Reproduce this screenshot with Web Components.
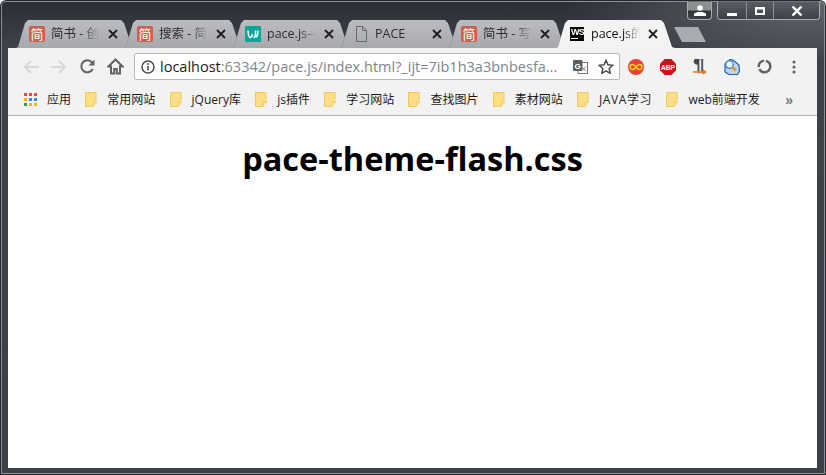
<!DOCTYPE html>
<html lang="zh">
<head>
<meta charset="utf-8">
<title>pace-theme-flash.css</title>
<style>
  html, body { margin: 0; padding: 0; height: 100%; overflow: hidden; }
  body { font-family: "Open Sans", "Noto Sans CJK SC", sans-serif; }
</style>
</head>
<body>
<browser-window>
  <window-controls slot="controls"></window-controls>
  <tab-strip slot="tabs">
    <browser-tab label="简书 - 创" icon="jian"></browser-tab>
    <browser-tab label="搜索 - 简" icon="jian"></browser-tab>
    <browser-tab label="pace.js—" icon="face"></browser-tab>
    <browser-tab label="PACE" icon="doc"></browser-tab>
    <browser-tab label="简书 - 写" icon="jian"></browser-tab>
    <browser-tab label="pace.js的" icon="ws" active></browser-tab>
  </tab-strip>
  <nav-bar slot="nav"></nav-bar>
  <bookmark-bar slot="bookmarks">
    <book-mark apps>应用</book-mark>
    <book-mark>常用网站</book-mark>
    <book-mark>jQuery库</book-mark>
    <book-mark>js插件</book-mark>
    <book-mark>学习网站</book-mark>
    <book-mark>查找图片</book-mark>
    <book-mark>素材网站</book-mark>
    <book-mark style="letter-spacing: .6px">JAVA学习</book-mark>
    <book-mark>web前端开发</book-mark>
  </bookmark-bar>
  <page-view>pace-theme-flash.css</page-view>
</browser-window>

<script>
// browser-window.js
class BrowserWindow extends HTMLElement {
  constructor() {
    super();
    this.attachShadow({ mode: "open" }).innerHTML = `
<style>
  :host {
    display: flex;
    flex-direction: column;
    box-sizing: border-box;
    height: 475px;
    width: 826px;
    padding-bottom: 7px;
    border-radius: 6px 6px 0 0;
    background:
      radial-gradient(ellipse 260px 60px at 100% 0, rgba(255,255,255,0.28), transparent),
      linear-gradient(#2b2e34 0, #3e434a 48px, #3b4049 100%);
    box-shadow: inset 0 0 0 1px #25272b, inset 0 0 0 2px #8d9096;
  }
  .body { display: flex; flex-direction: column; flex: 1; margin: 0 9px 0 8px; min-height: 0; }
</style>
<slot name="controls"></slot>
<slot name="tabs"></slot>
<div class="body">
  <slot name="nav"></slot>
  <slot name="bookmarks"></slot>
  <slot></slot>
</div>`;
  }
}

class WindowControls extends HTMLElement {
  constructor() {
    super();
    this.attachShadow({ mode: "open" }).innerHTML = `
<style>
  :host { display: flex; justify-content: flex-end; gap: 5px; height: 20px; box-sizing: border-box; padding: 1px 6px 0 0; }
  .btn {
    display: flex; align-items: center; justify-content: center;
    box-sizing: border-box; height: 19px;
    border: 1px solid #a9acb1; border-top-color: #6f7277;
    background: linear-gradient(#5a5e64, #3d4148);
  }
  .profile { width: 25px; border-radius: 0 0 4px 4px; background: linear-gradient(#8f9295 0, #8a8d90 45%, #33363b 55%, #3a3d43 100%); }
  .group { display: flex; border-radius: 0 0 4px 4px; overflow: hidden; border: 1px solid #a9acb1; border-top-color: #6f7277; height: 19px; box-sizing: border-box; }
  .group .btn { border: 0; height: 100%; border-left: 1px solid #8a8d92; }
  .group .btn:first-child { border-left: 0; }
  .min { width: 28px; } .max { width: 27px; } .close { width: 46px; }
  svg { display: block; }
</style>
<div class="btn profile">
  <svg width="12" height="11" viewBox="0 0 12 11"><circle cx="6" cy="3" r="2.800" fill="#fff"/><path d="M0 11V8.600L3.600 7h4.800L12 8.600V11z" fill="#fff"/></svg>
</div>
<div class="group">
  <div class="btn min"><svg width="10" height="14" viewBox="0 0 10 14"><rect y="9" width="10" height="3" fill="#fff"/></svg></div>
  <div class="btn max"><svg width="10" height="8" viewBox="0 0 10 8"><path d="M0 0h10v8H0z M2 2.500v3.500h6V2.500z" fill="#fff" fill-rule="evenodd"/></svg></div>
  <div class="btn close"><svg width="12" height="10" viewBox="0 0 12 10"><path d="M1.500 0.500 L10.500 9.500 M10.500 0.500 L1.500 9.500" stroke="#fff" stroke-width="2.400" fill="none"/></svg></div>
</div>`;
  }
}

class TabStrip extends HTMLElement {
  constructor() {
    super();
    this.attachShadow({ mode: "open" }).innerHTML = `
<style>
  :host { display: flex; align-items: flex-start; height: 28px; padding-left: 16px; }
  .new {
    width: 32px; height: 15px; margin: 7px 0 0 10px;
    background: #a9abae;
    clip-path: polygon(0 0, 24px 0, 32px 15px, 8px 15px);
  }
</style>
<slot></slot>
<div class="new"></div>`;
  }
}

const FAVICONS = {
  jian: `<span class="jian">简</span>`,
  face: `<svg width="16" height="16" viewBox="0 0 16 16"><rect width="16" height="16" rx="1" fill="#0ba39a"/><path d="M3 4.500c.2 4.500 .8 7 2.300 7S7.300 10 7.300 8M10.500 4.500V9c0 1.700-.8 2.500-2 2.500" stroke="#eafaf8" stroke-width="1.600" fill="none"/><path d="M13 4.500c0 3.500-.4 5.500-2 7" stroke="#eafaf8" stroke-width="1.600" fill="none"/></svg>`,
  doc: `<svg width="16" height="16" viewBox="0 0 16 16"><path d="M3.500 .5h6l4 4v11h-10z M9.500 .5v4h4" stroke="#666a6f" fill="none"/></svg>`,
  ws: `<span class="ws"><b>WS</b><i></i></span>`,
};

class BrowserTab extends HTMLElement {
  constructor() {
    super();
    this.attachShadow({ mode: "open" });
  }
  connectedCallback() {
    const active = this.hasAttribute("active");
    this.shadowRoot.innerHTML = `
<style>
  :host {
    display: block; flex: none; position: relative;
    width: 119px; height: 28px; margin-right: -11px;
    z-index: ${active ? 2 : 1};
    filter: drop-shadow(0.6px 0 0 rgba(70,72,76,0.75));
  }
  .shape {
    display: flex; align-items: center; box-sizing: border-box; height: 100%;
    padding: 0 0 1px 13px;
    background: ${active ? "#f3f3f3" : "linear-gradient(#bbbdc0, #a6a8ac)"};
    clip-path: polygon(0 28px, 2px 27px, 9px 3px, 12px 0, 105px 0, 108px 3px, 116px 27px, 119px 28px);
  }
  .icon { width: 16px; height: 16px; flex: none; }
  .icon svg { display: block; }
  .jian {
    display: block; width: 16px; height: 16px; border-radius: 2px;
    background: #c9614f; color: #fff; text-align: center;
    font: 13px/16px "Noto Sans CJK SC", sans-serif;
  }
  .ws { display: block; width: 14px; height: 14px; margin: 1px; background: #000; overflow: hidden; }
  .ws b { display: block; color: #fff; font: bold 9px/10px "Liberation Sans", sans-serif; letter-spacing: -0.8px; padding-left: 1px; }
  .ws i { display: block; width: 7px; height: 1px; margin: 1px 0 0 1px; background: #fff; }
  .title {
    flex: none; width: 49px; margin-left: 6px; overflow: hidden; white-space: nowrap;
    font: 12.500px/16px "Open Sans", "Noto Sans CJK SC", sans-serif; color: ${active ? "#111" : "#2b2d30"};
    -webkit-mask-image: linear-gradient(to right, #000 66%, transparent 100%);
    mask-image: linear-gradient(to right, #000 66%, transparent 100%);
  }
  .close { flex: none; margin-left: 8px; display: block; }
</style>
<div class="shape">
  <span class="icon">${FAVICONS[this.getAttribute("icon")] || ""}</span>
  <span class="title">${this.getAttribute("label")}</span>
  <svg class="close" width="10" height="10" viewBox="0 0 10 10"><path d="M1 1 L9 9 M9 1 L1 9" stroke="#1c1c1c" stroke-width="1.800" fill="none"/></svg>
</div>`;
  }
}

class NavBar extends HTMLElement {
  constructor() {
    super();
    this.attachShadow({ mode: "open" }).innerHTML = `
<style>
  :host {
    display: flex; align-items: center; box-sizing: border-box;
    height: 37px; padding: 0 9px; background: #f2f2f2;
  }
  .btn { display: flex; align-items: center; justify-content: center; flex: none; width: 28px; height: 28px; }
  .ext { width: 32px; }
  svg { display: block; }
  .omni {
    display: flex; align-items: center; flex: none; box-sizing: border-box;
    width: 486px; height: 27px; margin-left: 5px; padding-left: 6px;
    background: #fff; border: 1px solid #b9b9b9; border-radius: 2px;
  }
  .url {
    flex: none; width: 401px; margin-left: 5px; white-space: nowrap; overflow: hidden;
    font: 14.500px/25px "Open Sans", sans-serif; color: #80868b;
  }
  .url b { font-weight: normal; color: #202124; }
  .abp { fill: #fff; font: bold 8px "Liberation Sans", sans-serif; }
  .pil { fill: #44474a; font: bold 18px "Liberation Sans", sans-serif; }
  .g { fill: #fff; font: bold 8px "Liberation Sans", sans-serif; }
</style>
<div class="btn"><svg width="16" height="14" viewBox="0 0 16 14"><path d="M8 1 2 7l6 6M2 7h14" stroke="#d8d8d8" stroke-width="2" fill="none"/></svg></div>
<div class="btn"><svg width="16" height="14" viewBox="0 0 16 14"><path d="M8 1l6 6-6 6M14 7H0" stroke="#d8d8d8" stroke-width="2" fill="none"/></svg></div>
<div class="btn"><svg width="15" height="15" viewBox="0 0 15 15"><path d="M12.800 9.800A6 6 0 1 1 12 3.500" stroke="#5f6368" stroke-width="2" fill="none"/><path d="M14.500 .5v6h-6z" fill="#5f6368"/></svg></div>
<div class="btn"><svg width="17" height="17" viewBox="0 0 17 17"><path d="M8.500 1.500 1.500 8.500h2.500v7h3.200v-4.500h2.600v4.500h3.200v-7h2.500z" stroke="#5f6368" stroke-width="2" fill="none"/></svg></div>
<div class="omni">
  <svg width="14" height="14" viewBox="0 0 14 14"><circle cx="7" cy="7" r="6" stroke="#4a4d50" stroke-width="1.500" fill="none"/><path d="M7 6v4.500" stroke="#4a4d50" stroke-width="1.600"/><circle cx="7" cy="4" r="1" fill="#4a4d50"/></svg>
  <span class="url"><b>localhost</b>:63342/pace.js/index.html?_ijt=7ib1h3a3bnbesfa...</span>
  <svg width="15" height="14" viewBox="0 0 15 14" style="margin-left:12px"><rect x="5" y="2.500" width="9.500" height="11" fill="#fff" stroke="#777"/><rect width="9.500" height="11" rx="1" fill="#5c5f63"/><text class="g" x="1.500" y="8.500">G</text><path d="M8.500 6.500l4.500 4.500M13 6.500l-4.500 4.500" stroke="#888"/></svg>
  <svg width="16" height="15" viewBox="0 0 16 15" style="margin-left:10px"><path d="M8 1.300l2 4.500 4.800.5-3.600 3.200 1 4.800L8 11.900l-4.200 2.400 1-4.800L1.200 6.300 6 5.800z" stroke="#4a4d50" stroke-width="1.500" fill="none"/></svg>
</div>
<div class="btn ext"><svg width="16" height="16" viewBox="0 0 16 16"><circle cx="8" cy="8" r="8" fill="#e8413a"/><path d="M8 8C6.500 5.800 5.500 5.500 4.500 5.500a2.500 2.500 0 0 0 0 5C5.500 10.500 6.500 10.200 8 8s2.500-2.500 3.500-2.500a2.500 2.500 0 0 1 0 5C10.500 10.500 9.500 10.200 8 8z" stroke="#ffd21f" stroke-width="1.500" fill="none"/></svg></div>
<div class="btn ext"><svg width="16" height="16" viewBox="0 0 16 16"><path d="M4.700 0h6.600L16 4.700v6.600L11.300 16H4.700L0 11.300V4.700z" fill="#d0101a"/><text class="abp" x="8" y="11" text-anchor="middle" textLength="14" lengthAdjust="spacingAndGlyphs">ABP</text></svg></div>
<div class="btn ext"><svg width="14" height="16" viewBox="0 0 14 16"><text class="pil" x="0" y="12" textLength="12" lengthAdjust="spacingAndGlyphs">¶</text><path d="M0 13h11" stroke="#f47a1f" stroke-width="1.600"/><path d="M10 10.200l4 2.800-4 2.800z" fill="#f47a1f"/></svg></div>
<div class="btn ext"><svg width="16" height="16" viewBox="0 0 16 16"><path d="M1 5 6 .5l3 .5 6 5 .5 6-2 3.500H5l-4-2.500z" fill="#bcd6f5" stroke="#1f5fb5" stroke-width="1.200"/><circle cx="5.500" cy="5.500" r="3.800" fill="#f2f8ff" stroke="#3d7ccc" stroke-width="1.300"/><path d="M8.500 8.500l3.500 3" stroke="#e39b12" stroke-width="2.800"/></svg></div>
<div class="btn ext"><svg width="15" height="15" viewBox="0 0 15 15"><circle cx="7.500" cy="7.500" r="5.800" stroke="#5f6265" stroke-width="2.500" fill="none" stroke-dasharray="15 2 9 2 8 1"/></svg></div>
<div class="btn"><svg width="4" height="14" viewBox="0 0 4 14"><circle cx="2" cy="2" r="1.600" fill="#666"/><circle cx="2" cy="7" r="1.600" fill="#666"/><circle cx="2" cy="12" r="1.600" fill="#666"/></svg></div>`;
  }
}

class BookmarkBar extends HTMLElement {
  constructor() {
    super();
    this.attachShadow({ mode: "open" }).innerHTML = `
<style>
  :host {
    display: flex; align-items: center; box-sizing: border-box;
    height: 31px; padding: 0 0 1px 16px; gap: 14.250px;
    background: #f2f2f2; border-bottom: 1px solid #b4b4b4;
  }
  .more { margin-left: auto; margin-right: 24px; font: bold 14px "Liberation Sans", sans-serif; color: #777; }
</style>
<slot></slot>
<span class="more">»</span>`;
  }
}

class BookMark extends HTMLElement {
  constructor() {
    super();
    this.attachShadow({ mode: "open" });
  }
  connectedCallback() {
    const icon = this.hasAttribute("apps")
      ? `<svg width="13" height="13" viewBox="0 0 13 13">
          <rect width="3" height="3" fill="#e8483a"/><rect x="5" width="3" height="3" fill="#e8483a"/><rect x="10" width="3" height="3" fill="#e8483a"/>
          <rect y="5" width="3" height="3" fill="#f7b500"/><rect x="5" y="5" width="3" height="3" fill="#3f83e8"/><rect x="10" y="5" width="3" height="3" fill="#3f83e8"/>
          <rect y="10" width="3" height="3" fill="#2f9e4f"/><rect x="5" y="10" width="3" height="3" fill="#f7b500"/><rect x="10" y="10" width="3" height="3" fill="#f7b500"/>
        </svg>`
      : `<svg width="12" height="15" viewBox="0 0 12 15"><path d="M.5.5h10.500v10.500l-3 3.500H.5z" fill="#fdde85" stroke="#efca5b"/><path d="M8.500 14v-3.500H11.500" fill="#fff3c8" stroke="#efca5b"/></svg>`;
    this.shadowRoot.innerHTML = `
<style>
  :host { display: flex; align-items: center; gap: 10px; flex: none; }
  svg { display: block; }
  span { font: 12px/16px "Open Sans", "Noto Sans CJK SC", sans-serif; color: #1b1b1b; white-space: nowrap; }
</style>
${icon}<span><slot></slot></span>`;
  }
}

class PageView extends HTMLElement {
  constructor() {
    super();
    this.attachShadow({ mode: "open" }).innerHTML = `
<style>
  :host { display: block; flex: 1; background: #fff; text-align: center; padding-top: 21px; min-height: 0; }
  h1 { margin: 0; font: bold 32.500px/44px "Open Sans", "Liberation Sans", sans-serif; color: #000; }
</style>
<h1><slot></slot></h1>`;
  }
}

customElements.define("browser-window", BrowserWindow);
customElements.define("window-controls", WindowControls);
customElements.define("tab-strip", TabStrip);
customElements.define("browser-tab", BrowserTab);
customElements.define("nav-bar", NavBar);
customElements.define("bookmark-bar", BookmarkBar);
customElements.define("book-mark", BookMark);
customElements.define("page-view", PageView);
</script>
</body>
</html>
